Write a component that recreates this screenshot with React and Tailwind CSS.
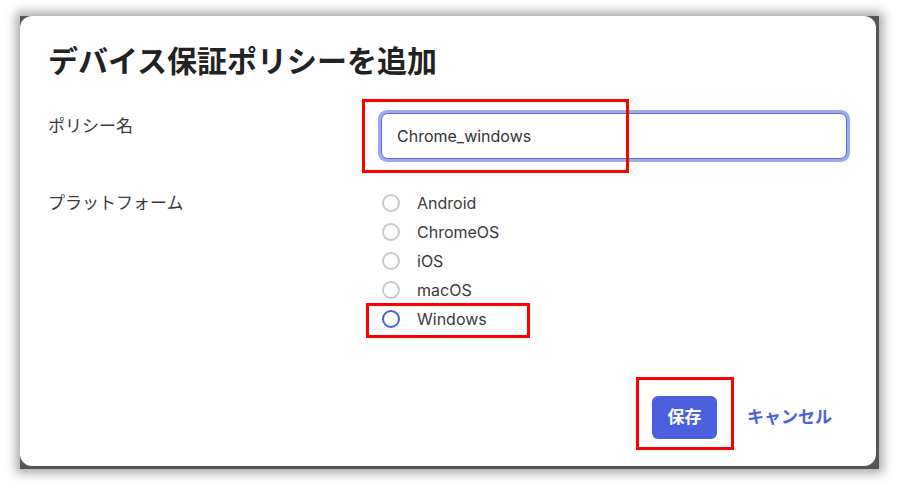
import React from 'react';

const platforms = ['Android', 'ChromeOS', 'iOS', 'macOS', 'Windows'];

const RadioRow = ({ label, active }) => (
  <div className="flex items-center h-[29px]">
    <span
      className={`w-[18px] h-[18px] rounded-full ml-[2px] border-2 ${active ? 'border-[#4a5ee0]' : 'border-[#c9c9c9]'}`}
    />
    <span className="ml-[17px] text-[16px] text-[#3a3a3a]">{label}</span>
  </div>
);

export default function App() {
  return (
    <div
      className="min-h-[486px] bg-white pt-[16px] pl-[20px]"
      style={{ fontFamily: "Inter, 'Noto Sans CJK JP', sans-serif" }}
    >
      <div className="relative w-[859px] h-[453px] bg-[#555] shadow-[0_0_10px_4px_rgba(0,0,0,0.35)]">
        <div className="w-[856px] h-[450px] bg-white rounded-[12px] pl-[28px] pr-[26px] pt-[27px] flex flex-col">
          <h1 className="text-[30px] leading-[36px] font-bold text-[#222]">デバイス保証ポリシーを追加</h1>

          <div className="grid grid-cols-[330px_1fr] mt-[31px]">
            <div className="pt-[4px] text-[17px] leading-[24px] text-[#3a3a3a]">ポリシー名</div>
            <div className="rounded-[9px] p-[3px] bg-[#9ea9f0]">
              <div className="h-[46px] rounded-[7px] border border-[#5a6ee0] bg-white flex items-center pl-[15px] text-[16px] text-[#333]">
                Chrome_windows
              </div>
            </div>

            <div className="mt-[29px] text-[17px] leading-[24px] text-[#3a3a3a]">プラットフォーム</div>
            <div className="mt-[26px] pl-[2px]">
              {platforms.map((p) => (
                <RadioRow key={p} label={p} active={p === 'Windows'} />
              ))}
            </div>
          </div>

          <div className="flex-1" />
          <div className="flex items-center justify-end pb-[27px] pr-[18px]">
            <button className="w-[65px] h-[43px] rounded-[6px] bg-[#4c5fdc] text-white font-bold text-[17px]">
              保存
            </button>
            <button className="ml-[30px] text-[#4c5fdc] font-bold text-[17px]">キャンセル</button>
          </div>
        </div>

        {/* annotation boxes */}
        <div className="absolute left-[342px] top-[83px] w-[267px] h-[74px] border-[3px] border-[#f00]" />
        <div className="absolute left-[346px] top-[287px] w-[164px] h-[35px] border-[3px] border-[#f00]" />
        <div className="absolute left-[616px] top-[361px] w-[98px] h-[73px] border-[3px] border-[#f00]" />
      </div>
    </div>
  );
}
